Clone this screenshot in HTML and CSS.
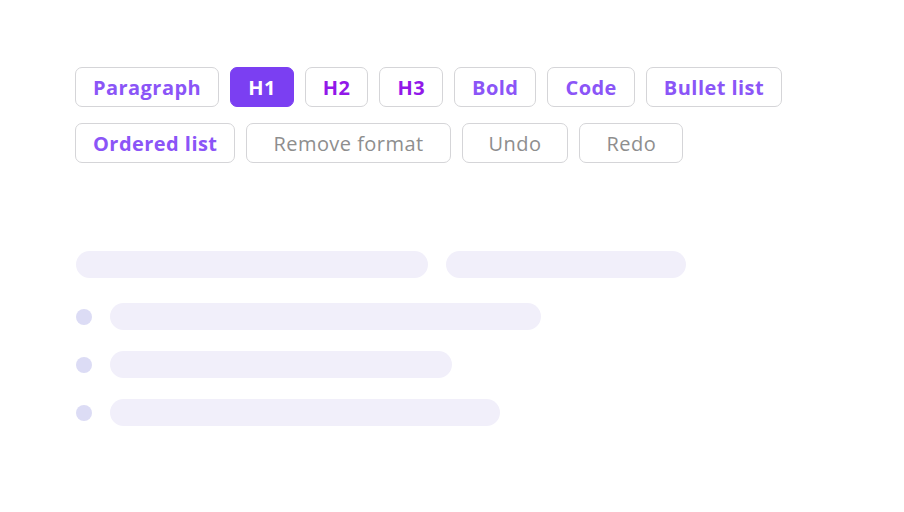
FILE: index.html
```html
<!DOCTYPE html>
<html>
<head>
<meta charset="utf-8">
<link rel="stylesheet" href="styles.css">
</head>
<body>
<div class="page">
  <div class="toolbar">
    <div class="row">
      <button class="btn">Paragraph</button>
      <button class="btn active">H1</button>
      <button class="btn heading">H2</button>
      <button class="btn heading">H3</button>
      <button class="btn">Bold</button>
      <button class="btn">Code</button>
      <button class="btn">Bullet list</button>
    </div>
    <div class="row">
      <button class="btn">Ordered list</button>
      <button class="btn muted">Remove format</button>
      <button class="btn muted">Undo</button>
      <button class="btn muted">Redo</button>
    </div>
  </div>
  <div class="skeleton">
    <div class="title-row">
      <div class="bar" style="width:352px"></div>
      <div class="bar" style="width:240px"></div>
    </div>
    <div class="item"><span class="dot"></span><div class="bar" style="width:431px"></div></div>
    <div class="item"><span class="dot"></span><div class="bar" style="width:342px"></div></div>
    <div class="item"><span class="dot"></span><div class="bar" style="width:390px"></div></div>
  </div>
</div>
</body>
</html>
```
FILE: styles.css
```css
html, body {
  margin: 0;
  padding: 0;
  background: #ffffff;
}
.page {
  width: 904px;
  height: 512px;
  box-sizing: border-box;
  padding: 67px 0 0 75px;
  font-family: "Open Sans", "Inter", sans-serif;
}
.toolbar {
  display: flex;
  flex-direction: column;
  gap: 16px;
}
.row {
  display: flex;
  gap: 11px;
}
.btn {
  height: 40px;
  box-sizing: border-box;
  padding: 2px 17px 0;
  border: 1.5px solid #d5d5d8;
  border-radius: 7px;
  background: #ffffff;
  color: #8b55f7;
  font-family: inherit;
  font-size: 20px;
  font-weight: 700;
  letter-spacing: 0.45px;
  line-height: 1;
}
.btn.heading {
  color: #9218e9;
}
.btn.active {
  background: #7b3ff2;
  border-color: #7b3ff2;
  color: #ffffff;
}
.btn.muted {
  color: #8e8e8e;
  font-weight: 400;
  letter-spacing: 0.45px;
  padding: 2px 26px 0;
}
.skeleton {
  margin-top: 88px;
  display: flex;
  flex-direction: column;
  gap: 21px;
}
.title-row {
  display: flex;
  gap: 18px;
  padding-left: 1px;
  margin-bottom: 4px;
}
.bar {
  height: 27px;
  border-radius: 14px;
  background: #f1effa;
}
.item {
  display: flex;
  align-items: center;
  gap: 18px;
  padding-left: 1px;
}
.dot {
  width: 16px;
  height: 16px;
  border-radius: 50%;
  background: #dcdcf5;
}
```
